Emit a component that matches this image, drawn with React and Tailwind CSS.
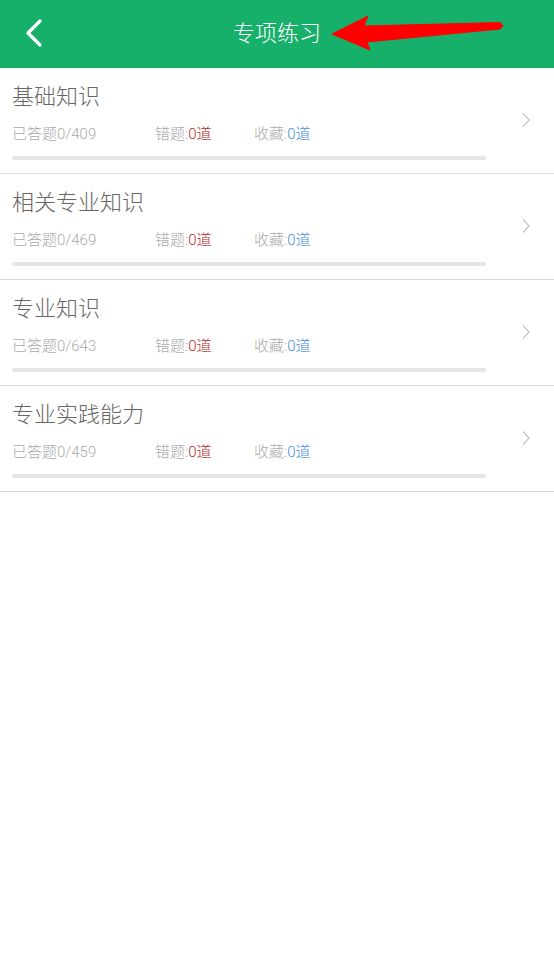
const subjects = [
  { name: "基础知识", total: 409 },
  { name: "相关专业知识", total: 469 },
  { name: "专业知识", total: 643 },
  { name: "专业实践能力", total: 459 },
];

const font = { fontFamily: "Roboto, 'Noto Sans CJK SC', sans-serif" };

const Header = () => (
  <div className="relative h-[68px] bg-[#16b06a] flex items-center justify-center">
    <svg className="absolute left-0 top-0" width="60" height="68" viewBox="0 0 60 68">
      <polyline points="40,21 28,33 40,45" fill="none" stroke="#fff" strokeWidth="3.2" strokeLinecap="round" strokeLinejoin="round" />
    </svg>
    <span className="text-white text-[22px] leading-none font-light">专项练习</span>
    {/* red annotation arrow */}
    <svg className="absolute left-0 top-0 pointer-events-none" width="554" height="68" viewBox="0 0 554 68">
      <polygon
        points="332,34 368,16 364,26 500,22.5 503,25.5 500,29 367,42 370,50"
        fill="#ff0000"
        stroke="#ff0000"
        strokeWidth="1"
        strokeLinejoin="round"
      />
    </svg>
  </div>
);

const SubjectRow = ({ item }) => (
  <div className="flex items-center h-[106px] border-b border-[#dcdcdc]">
    <div className="flex-1 pl-[12px] pt-[15px] pb-[13px]">
      <div className="text-[22px] leading-[28px] text-[#666] font-light">{item.name}</div>
      <div className="flex mt-[13px] text-[15px] leading-[20px] text-[#aaa] font-light">
        <span className="w-[143px]">已答题0/{item.total}</span>
        <span className="w-[99px]">
          错题:<span className="text-[#b52a2a]">0道</span>
        </span>
        <span>
          收藏:<span className="text-[#4a8fe0]">0道</span>
        </span>
      </div>
      <div className="mt-[12px] h-[4px] w-[474px] bg-[#e6e6e6] rounded-full" />
    </div>
    <div className="w-[68px] flex items-center justify-center pl-[12px] pb-[2px]">
      <svg width="10" height="16" viewBox="0 0 10 16">
        <polyline points="2,1.5 8,8 2,14.5" fill="none" stroke="#c8c8c8" strokeWidth="1.4" />
      </svg>
    </div>
  </div>
);

export default function App() {
  return (
    <div className="w-[554px] h-[954px] bg-white" style={font}>
      <Header />
      {subjects.map((s) => (
        <SubjectRow key={s.name} item={s} />
      ))}
    </div>
  );
}
